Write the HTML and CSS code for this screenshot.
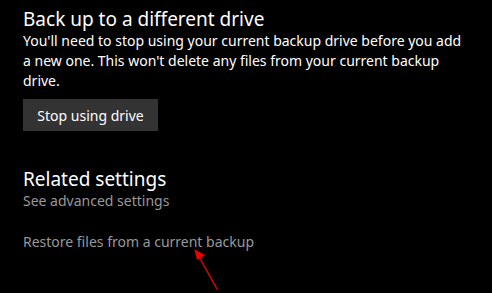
FILE: index.html
```html
<!DOCTYPE html>
<html lang="en">
<head>
    <meta charset="UTF-8">
    <title>Backup</title>
    <link rel="stylesheet" href="styles.css">
</head>
<body>
    <div class="page">
        <div class="section">
            <div class="title">Back up to a different drive</div>
            <p class="desc">You'll need to stop using your current backup drive before you add a new one. This won't delete any files from your current backup drive.</p>
            <button class="btn">Stop using drive</button>
        </div>

        <div class="section related">
            <div class="title">Related settings</div>
            <a class="link">See advanced settings</a>
            <a class="link restore">Restore files from a current backup</a>
        </div>
    </div>

    <svg class="arrow" width="30" height="45" viewBox="0 0 30 45">
        <line x1="24" y1="41" x2="5" y2="7" stroke="#e00" stroke-width="1.4"/>
        <polygon points="1.3,1.3 12,7 4,12" fill="#e00"/>
    </svg>
</body>
</html>
```

FILE: styles.css
```css
* {
    margin: 0;
    padding: 0;
    box-sizing: border-box;
    font-family: "Noto Sans", sans-serif;
}

body {
    background: #000;
    color: #fff;
    width: 492px;
    height: 293px;
    overflow: hidden;
    position: relative;
}

.page {
    padding: 7px 0 0 23px;
}

.title {
    font-size: 19px;
    line-height: 24px;
}

.desc {
    font-size: 14px;
    line-height: 20px;
    width: 440px;
}

.btn {
    display: block;
    margin-top: 8px;
    background: #333;
    color: #fff;
    border: none;
    font-size: 14px;
    padding: 0 14px;
    height: 32px;
    width: 135px;
}

.related {
    margin-top: 36px;
}

.link {
    display: block;
    color: #999;
    font-size: 14px;
    line-height: 20px;
}

.restore {
    margin-top: 21px;
}

.arrow {
    position: absolute;
    left: 193px;
    top: 248px;
}
```
